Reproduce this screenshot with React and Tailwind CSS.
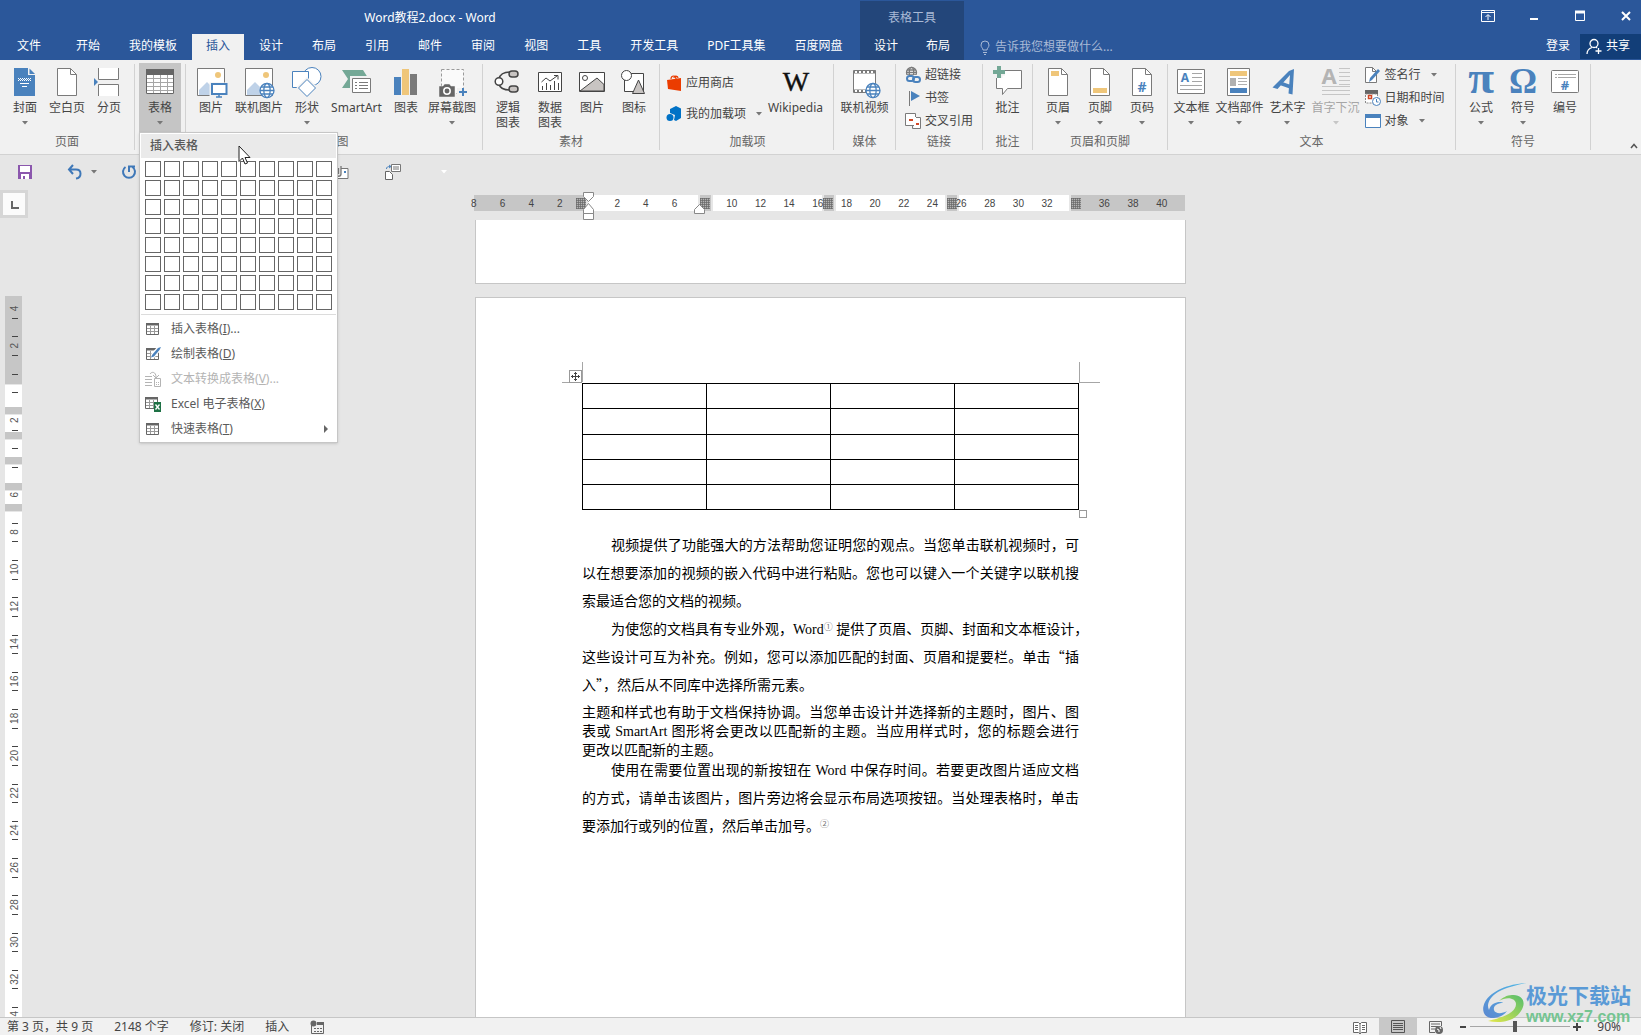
import { useState } from "react";
import clsx from "clsx";

const UI_FONT = "font-['Noto_Sans','Noto_Sans_CJK_SC',sans-serif]";
const DOC_FONT = "font-['Liberation_Serif','Noto_Sans_CJK_SC',serif]";

const TABS = [
  "开始", "我的模板", "插入", "设计", "布局", "引用", "邮件", "审阅",
  "视图", "工具", "开发工具", "PDF工具集", "百度网盘",
];

/* ---------- icons ---------- */

function Icon({ size = 32, className, children }) {
  return (
    <svg
      width={size}
      height={size}
      viewBox={`0 0 ${size} ${size}`}
      fill="none"
      className={clsx("shrink-0 overflow-visible", className)}
      aria-hidden="true"
    >
      {children}
    </svg>
  );
}

function Caret({ className }) {
  return (
    <svg width="6" height="4" viewBox="0 0 6 4" className={clsx("shrink-0", className)} aria-hidden="true">
      <path d="M0 0h6L3 3.5z" fill="currentColor" />
    </svg>
  );
}

const Globe = ({ x, y, r = 7, color = "#4a82bd" }) => (
  <g stroke={color} strokeWidth="1.3" fill="#fff">
    <circle cx={x} cy={y} r={r} />
    <ellipse cx={x} cy={y} rx={r * 0.45} ry={r} />
    <path d={`M${x - r} ${y}h${2 * r}M${x - r * 0.85} ${y - r * 0.5}h${r * 1.7}M${x - r * 0.85} ${y + r * 0.5}h${r * 1.7}`} />
  </g>
);

const CoverIcon = () => (
  <Icon>
    <path d="M5 2h14v7h7v21H5z" fill="#4a82bd" />
    <path d="M20.5 2.5V8H26z" fill="#4a82bd" />
    <path d="M9 12.5h13M9 14.5h13" stroke="#fff" strokeDasharray="1 1" />
    <path d="M10 13.5h12" stroke="#fff" strokeDasharray="1 1" />
    <path d="M11 17.5h9M13 20.5h5" stroke="#fff" />
  </Icon>
);

const PagePath = () => (
  <>
    <path d="M6.5 2.5h13l6 6v21h-19z" fill="#fff" stroke="#7a7a7a" />
    <path d="M19.5 2.5v6h6" stroke="#7a7a7a" />
  </>
);

const BlankIcon = () => (
  <Icon>
    <PagePath />
  </Icon>
);

const BreakIcon = () => (
  <Icon>
    <path d="M5.5 2v11.500h20V2M5.500 30V18.500h20V30" fill="#fff" stroke="#7a7a7a" />
    <path d="M1 12v8l4-4z" fill="#4a82bd" />
  </Icon>
);

const TableIcon = () => (
  <Icon>
    <path d="M2 3h28v25H2z" fill="#fff" />
    <path d="M2 3h28v6H2z" fill="#666" />
    <path d="M2 12.5h28M2 16.5h28M2 20.5h28M2 24.5h28M9.5 9v19M16.5 9v19M23.5 9v19" stroke="#a6a6a6" />
    <path d="M2.5 3.5h27v24h-27z" stroke="#666" />
  </Icon>
);

const Photo = () => (
  <>
    <path d="M2.5 2.5h27v27h-27z" fill="#fff" stroke="#7a7a7a" />
    <circle cx="23" cy="9" r="3" fill="#efc67a" />
    <path d="M4 29v-5l8-8 9 9v4z" fill="#bfd2e8" />
  </>
);

const PictureIcon = () => (
  <Icon>
    <Photo />
    <path d="M16.5 18.5h15v10h-15z" fill="#fff" stroke="#f1f1f1" strokeWidth="4" />
    <path d="M17 18h14.5v10H17z" fill="#fff" stroke="#4a82bd" strokeWidth="2" />
    <path d="M24 28v3M21 31h6" stroke="#4a82bd" strokeWidth="1.5" />
  </Icon>
);

const OnlinePictureIcon = () => (
  <Icon>
    <Photo />
    <Globe x={24} y={24.5} />
  </Icon>
);

const ShapesIcon = () => (
  <Icon>
    <circle cx="21" cy="10.5" r="9" fill="#fff" stroke="#4a82bd" />
    <path d="M1.5 5.5h16v16h-16z" fill="#fff" stroke="#4a82bd" />
    <path d="M16 11l10.5 10.5L16 32 5.5 21.5z" fill="#f1f1f1" />
    <path d="M16 13.5l8.5 8.5L16 30.5 7.5 22z" fill="#fff" stroke="#4a82bd" />
  </Icon>
);

const SmartArtIcon = () => (
  <Icon>
    <path d="M2 4h21l7 11-7 7H2l6-9z" fill="#74a896" />
    <path d="M10 10h23v19H10z" fill="#f1f1f1" />
    <path d="M12.5 12.5h18v14h-18z" fill="#fff" stroke="#7a7a7a" />
    <path d="M15 16.5h2M19 16.5h9M15 19.5h2M19 19.5h9M15 22.5h2M19 22.5h9" stroke="#7a7a7a" />
  </Icon>
);

const ChartIcon = () => (
  <Icon>
    <path d="M4 11h7v18H4z" fill="#4a82bd" />
    <path d="M12 3h7v26h-7z" fill="#efc67a" />
    <path d="M20 8h7v21h-7z" fill="#7a7a7a" />
  </Icon>
);

const ScreenshotIcon = () => (
  <Icon>
    <path d="M5.5 3.5h22v24h-22z" fill="#fafafa" stroke="#9a9a9a" strokeDasharray="3 2" />
    <path d="M3 20h4l1.5-2h5l1.5 2h4v11H3z" fill="#666" stroke="#f1f1f1" strokeWidth=".5" />
    <circle cx="11" cy="25" r="3.2" stroke="#fff" strokeWidth="1.5" />
    <path d="M21 22h10v8H21z" fill="#f1f1f1" />
    <path d="M27 22v8M23 26h8" stroke="#4a82bd" strokeWidth="2" />
  </Icon>
);

const LogicIcon = () => (
  <Icon>
    <path d="M7 13c1-5 5-7 11-7M7 18c1 5 5 6 11 6" stroke="#444" strokeWidth="1.5" />
    <circle cx="7" cy="15.5" r="3.8" fill="#fff" stroke="#444" strokeWidth="1.5" />
    <rect x="17" y="5" width="9" height="6" rx="3" fill="#c8c4c2" stroke="#444" strokeWidth="1.5" />
    <rect x="17" y="20" width="9" height="6" rx="3" fill="#c8c4c2" stroke="#444" strokeWidth="1.5" />
  </Icon>
);

const DataChartIcon = () => (
  <Icon>
    <path d="M4.5 6.5h23v19h-23z" fill="#fff" stroke="#444" />
    <path d="M8.5 20v4M12.5 17v7M16.5 19v5M20.5 15v9M24.5 17v7" stroke="#444" />
    <path d="M7.5 16l4.5-4 4 3 7-5M20 9.5h4v4" stroke="#444" />
  </Icon>
);

const MaterialPictureIcon = () => (
  <Icon>
    <path d="M3.5 6.5h25v19h-25z" fill="#fff" stroke="#444" />
    <path d="M4 25l17-13 7 6.500V25z" fill="#c8c4c2" stroke="#444" />
    <circle cx="9" cy="12" r="2.500" stroke="#444" />
  </Icon>
);

const MaterialShapeIcon = () => (
  <Icon>
    <path d="M6.5 7.500h19v18h-19z" fill="#fff" stroke="#444" />
    <circle cx="8.500" cy="9.500" r="5" fill="#fff" stroke="#444" />
    <path d="M20.500 14l6 13.500h-12z" fill="#c8c4c2" stroke="#444" />
  </Icon>
);

const WikipediaIcon = () => (
  <Icon>
    <text x="16" y="25" textAnchor="middle" fontSize="28" fill="#111" stroke="#111" strokeWidth=".4" className="font-['Liberation_Serif',serif]">
      W
    </text>
  </Icon>
);

const VideoIcon = () => (
  <Icon>
    <path d="M5.5 4.5h22v22h-22z" fill="#fff" stroke="#7a7a7a" />
    <path d="M6 6h22M6 25h22" stroke="#7a7a7a" strokeWidth="3" />
    <path d="M7 6h20M7 25h20" stroke="#fff" strokeWidth="2" strokeDasharray="2 2" />
    <Globe x={25} y={24.5} />
  </Icon>
);

const CommentIcon = () => (
  <Icon>
    <path d="M4.5 4.5h25v18h-14l-5 6v-6h-6z" fill="#fff" stroke="#7a7a7a" strokeLinejoin="round" />
    <path d="M7 0v12M1 6h12" stroke="#f1f1f1" strokeWidth="7" />
    <path d="M7 0v12M1 6h12" stroke="#74a896" strokeWidth="4" />
  </Icon>
);

const HeaderIcon = () => (
  <Icon>
    <PagePath />
    <path d="M9 5h8v5H9z" fill="#efc67a" />
  </Icon>
);

const FooterIcon = () => (
  <Icon>
    <PagePath />
    <path d="M9 22h14v5H9z" fill="#efc67a" />
  </Icon>
);

const PageNumberIcon = () => (
  <Icon>
    <PagePath />
    <text x="16" y="26" textAnchor="middle" fontSize="14" fontWeight="bold" fill="#4a82bd">
      #
    </text>
  </Icon>
);

const TextBoxIcon = () => (
  <Icon>
    <path d="M2.5 3.5h27v24h-27z" fill="#fff" stroke="#7a7a7a" />
    <text x="10" y="16" textAnchor="middle" fontSize="12" fontWeight="bold" fill="#4a82bd">
      A
    </text>
    <path d="M17 7.5h10M17 11.5h10M17 15.5h10M5 19.5h22M5 23.5h22" stroke="#a6a6a6" />
  </Icon>
);

const PartsIcon = () => (
  <Icon>
    <path d="M4.5 2.5h22v27h-22z" fill="#fff" stroke="#7a7a7a" />
    <path d="M7 5h17v5H7z" fill="#efc67a" />
    <path d="M7 12h6v8H7z" fill="#b0b0b0" />
    <path d="M15 12.5h9M15 15.5h9M15 18.5h9" stroke="#b0b0b0" />
    <path d="M7 22h17v5H7z" fill="#4a82bd" />
  </Icon>
);

const WordArtIcon = () => (
  <Icon>
    <path d="M1.500 21.500L18 5l5-2-1.500 25.500-4-1L19 9 6.500 23z" fill="#4a82bd" />
    <path d="M10 17.500l10 3.500" stroke="#4a82bd" strokeWidth="3.500" />
  </Icon>
);

const DropCapIcon = () => (
  <Icon>
    <text x="9" y="18" textAnchor="middle" fontSize="22" fontWeight="bold" fill="#b4b4b4">
      A
    </text>
    <path d="M19 2.5h11M19 6.5h11M19 10.5h11M19 14.5h11M19 18.5h11M2 20.500h28M2 24.500h28M2 28.500h28" stroke="#c6c6c6" />
  </Icon>
);

const SymbolText = ({ children, size }) => (
  <Icon>
    <text x="16" y="27" textAnchor="middle" fontSize={size} fontWeight="bold" fill="#4a82bd" className="font-['Liberation_Serif',serif]">
      {children}
    </text>
  </Icon>
);

const PiIcon = () => <SymbolText size={47}>π</SymbolText>;
const OmegaIcon = () => <SymbolText size={35}>Ω</SymbolText>;

const NumberIcon = () => (
  <Icon>
    <rect x="2.5" y="4.5" width="27" height="22" rx="1" fill="#fff" stroke="#7a7a7a" />
    <path d="M6 8.5h2M9 8.5h18M6 11.5h2M9 11.5h18" stroke="#a6a6a6" />
    <text x="16" y="24" textAnchor="middle" fontSize="13" fontWeight="bold" fill="#4a82bd">
      #
    </text>
  </Icon>
);

const StoreIcon = () => (
  <Icon size={16}>
    <path d="M1 5l14-2v13L2 14z" fill="#eb3c00" />
    <path d="M5 4c0-4 5-4 5 0M8 3c0-3 4-2 4 0" stroke="#eb3c00" strokeWidth="1.2" />
  </Icon>
);

const AddinIcon = () => (
  <Icon size={16}>
    <path d="M4 3l6-3 5 2.500V12l-5 3-2-1 1-5-5-2z" fill="#0072c6" />
    <circle cx="4" cy="11.500" r="3.500" fill="#0072c6" />
  </Icon>
);

const LinkIcon = () => (
  <Icon size={16}>
    <Globe x={6.5} y={5.5} r={5} color="#7a7a7a" />
    <path d="M0 8h16v8H0z" fill="#f1f1f1" />
    <rect x="2" y="9" width="7" height="5" rx="2.5" stroke="#4a82bd" strokeWidth="2" />
    <rect x="8" y="10" width="7" height="5" rx="2.5" stroke="#4a82bd" strokeWidth="2" />
  </Icon>
);

const BookmarkIcon = () => (
  <Icon size={16}>
    <path d="M4.5 1v15" stroke="#7a7a7a" />
    <path d="M6 1l9 5-9 5z" fill="#4a82bd" />
  </Icon>
);

const CrossRefIcon = () => (
  <Icon size={16}>
    <path d="M.5.5h10v12H.5z" fill="#fff" stroke="#7a7a7a" />
    <path d="M9 4h7v12H9z" fill="#fff" />
    <path d="M11 4.5h4.5v11h-8V13" stroke="#7a7a7a" />
    <path d="M4 6h4v2H4zM11 10h3v2h-3z" fill="#d24726" />
  </Icon>
);

const SignatureIcon = () => (
  <Icon size={16}>
    <path d="M.5.5h7l4 4v11H.5z" fill="#fff" stroke="#7a7a7a" />
    <path d="M7.5.5v4h4" stroke="#7a7a7a" />
    <path d="M15 4l-8 9-3 2 1-4 8-9z" fill="#4a82bd" />
  </Icon>
);

const DateIcon = () => (
  <Icon size={16}>
    <path d="M0 0h13v4H0z" fill="#666" />
    <path d="M.5 4h12v9H.5z" fill="#fff" stroke="#8a8a8a" strokeDasharray="2 1" />
    <path d="M3.5 5.5h3v3h-3z" stroke="#d24726" strokeWidth="1.5" />
    <circle cx="11.5" cy="11.5" r="4" fill="#fff" stroke="#4a82bd" />
    <path d="M11.5 9v3h2" stroke="#4a82bd" />
  </Icon>
);

const ObjectIcon = () => (
  <Icon size={16}>
    <path d="M.5 1.5h15v13H.5z" fill="#fff" stroke="#4a82bd" />
    <path d="M0 1h16v4H0z" fill="#4a82bd" />
  </Icon>
);

const MiniTable = ({ color = "#666" }) => (
  <>
    <path d="M1.5 2.5h12v11h-12z" fill="#fff" stroke={color} />
    <path d="M1 2h13v2.5H1z" fill={color} />
    <path d="M2 7.5h11M2 10.5h11M5.5 5v8M9.5 5v8" stroke="#9a9a9a" />
  </>
);

const InsertTableIcon = () => (
  <Icon size={16}>
    <MiniTable />
  </Icon>
);

const DrawTableIcon = () => (
  <Icon size={16}>
    <MiniTable />
    <path d="M13 0h3v4l-7 8H6V8z" fill="#fff" />
    <path d="M16 1l-1.500 3L9 10.500 6 11.500 7 9l6-7z" fill="#4a82bd" />
  </Icon>
);

const ConvertIcon = () => (
  <Icon size={16}>
    <path d="M0 5.5h7M0 8.5h7M0 11.5h7M0 14.5h7M5 3c2-3 6-2 6 3M8 4l3 3 3-3" stroke="#b4b4b4" />
    <path d="M9.5 7.5h6v8h-6z" fill="#fff" stroke="#b4b4b4" />
    <path d="M11 11.5h4M11 13.5h4" stroke="#b4b4b4" strokeDasharray="1 1" />
  </Icon>
);

const ExcelIcon = () => (
  <Icon size={16}>
    <g transform="translate(-1 -1)">
      <MiniTable />
    </g>
    <path d="M9 6h7v10H9z" fill="#1e7145" />
    <path d="M10.5 8.5l4 5M14.5 8.5l-4 5" stroke="#fff" strokeWidth="1.3" />
  </Icon>
);

/* ---------- title bar and tabs ---------- */

function WindowButton({ label, children }) {
  return (
    <button aria-label={label} className="flex h-8 w-[46px] items-center justify-center">
      <Icon size={14}>{children}</Icon>
    </button>
  );
}

function Header() {
  const [tab, setTab] = useState("插入");

  return (
    <header className="flex h-[60px] shrink-0 bg-[#2b579a] text-xs text-white">
      <div className="flex w-[860px] shrink-0 flex-col">
        <h1 className="flex h-[34px] items-center justify-center pt-0.5 font-normal">Word教程2.docx - Word</h1>
        <nav className="flex h-[26px] gap-px">
          <button className="mr-[3px] w-[58px] shrink-0 pb-0.5">文件</button>
          {TABS.map((t) => (
            <button
              key={t}
              onClick={() => setTab(t)}
              className={clsx("shrink-0 px-3.5 pb-0.5 whitespace-nowrap", tab === t && "bg-[#f1f1f1] text-[#2b579a]")}
            >
              {t}
            </button>
          ))}
        </nav>
      </div>
      <div className="mt-px flex w-[104px] shrink-0 flex-col bg-[#23467a]">
        <p className="flex h-[33px] items-center justify-center text-[#a9bad6]">表格工具</p>
        <div className="flex h-[26px] justify-center">
          <button className="w-[52px] pb-0.5">设计</button>
          <button className="w-[52px] pb-0.5">布局</button>
        </div>
      </div>
      <div className="flex min-w-0 flex-1 flex-col">
        <div className="flex h-[34px] justify-end">
          <WindowButton label="功能区显示选项">
            <path d="M.5 1.5h13v11H.5zM.5 3.5h13M7 11V6M4.500 8L7 5.500 9.500 8" stroke="#fff" />
          </WindowButton>
          <WindowButton label="最小化">
            <path d="M3 10h8" stroke="#fff" strokeWidth="2" />
          </WindowButton>
          <WindowButton label="最大化">
            <path d="M2.5 2.500h9v9h-9z" stroke="#fff" />
            <path d="M2 3h10" stroke="#fff" strokeWidth="3" />
          </WindowButton>
          <button aria-label="关闭" className="flex h-8 w-[38px] items-center justify-center pl-2">
            <Icon size={14}>
              <path d="M3 3l8 8M11 3l-8 8" stroke="#fff" strokeWidth="2" />
            </Icon>
          </button>
        </div>
        <div className="flex h-[26px] items-center">
          <label className="flex flex-1 items-center gap-1 pl-[15px] text-[#a9bad6]">
            <Icon size={12}>
              <path d="M4 9C4 7 2 6.500 2 4a4 4 0 018 0c0 2.500-2 3-2 5zM4 11.500h4M5 13.500h2" stroke="#a9bad6" />
            </Icon>
            <input
              aria-label="告诉我您想要做什么"
              placeholder="告诉我您想要做什么..."
              className="w-40 bg-transparent outline-none placeholder:text-[#a9bad6]"
            />
          </label>
          <button className="px-2.5 pb-0.5">登录</button>
          <button className="flex h-[25px] w-[61px] items-center gap-1 self-start bg-[#123e78] pb-0.5 pl-1.5">
            <Icon size={16}>
              <circle cx="8" cy="5.500" r="4" stroke="#fff" strokeWidth="1.300" />
              <path d="M1 16c0-4 2-5.500 5-6.500M10 9l1 1M12.500 10v6M9.500 13h6" stroke="#fff" strokeWidth="1.300" />
            </Icon>
            共享
          </button>
        </div>
      </div>
    </header>
  );
}

/* ---------- ribbon ---------- */

function Group({ label, className, children }) {
  return (
    <section className={clsx("flex shrink-0 py-1", className)}>
      <div className="-mt-px flex min-w-0 flex-1 flex-col">
        <div className="flex h-[74px] justify-center">{children}</div>
        {label && <h2 className="text-center leading-4 text-[#666]">{label}</h2>}
      </div>
      <div className="w-px bg-[#d2d2d2]" />
    </section>
  );
}

function BigButton({ icon: Ico, label, label2, caret, pad = "px-1.5", disabled }) {
  return (
    <button
      disabled={disabled}
      className={clsx("flex shrink-0 flex-col items-center pt-[3px] leading-[15px] whitespace-nowrap", pad, disabled ? "text-[#a6a6a6]" : "text-[#444]")}
    >
      <Ico />
      <span className="mt-0.5">{label}</span>
      {label2 && <span>{label2}</span>}
      {caret && <Caret className={clsx("mt-1.5", disabled ? "text-[#c6c6c6]" : "text-[#777]")} />}
    </button>
  );
}

function SmallButton({ icon: Ico, label, caret, height = "h-[23px]" }) {
  return (
    <button className={clsx("flex items-center gap-1 whitespace-nowrap text-[#444]", height)}>
      <Ico />
      {label}
      {caret && <Caret className="ml-1.5 text-[#777]" />}
    </button>
  );
}

const MENU_ITEMS = [
  { icon: InsertTableIcon, text: "插入表格", hotkey: "I", dots: true },
  { icon: DrawTableIcon, text: "绘制表格", hotkey: "D" },
  { icon: ConvertIcon, text: "文本转换成表格", hotkey: "V", dots: true, disabled: true },
  { icon: ExcelIcon, text: "Excel 电子表格", hotkey: "X" },
  { icon: InsertTableIcon, text: "快速表格", hotkey: "T", submenu: true },
];

function TableMenu() {
  return (
    <div className="absolute top-[69px] left-0 z-10 w-[199px] border border-[#c6c6c6] bg-white pb-px text-[#5a5a5a] shadow-sm">
      <h3 className="m-px h-6 bg-[#eaeaea] pl-[9px] leading-6 font-medium">插入表格</h3>
      <div className="mt-[3px] grid w-fit grid-cols-10 gap-[3px] px-[5px]">
        {Array.from({ length: 80 }, (_, i) => (
          <button
            key={i}
            aria-label={`${(i % 10) + 1} × ${Math.floor(i / 10) + 1}`}
            className="size-4 border border-[#666] bg-white"
          />
        ))}
      </div>
      <div className="mx-px mt-1 border-t border-[#dcdcdc] pt-px">
        {MENU_ITEMS.map((item) => (
          <button
            key={item.text}
            disabled={item.disabled}
            className={clsx("flex h-[25px] w-full items-center gap-2.5 pr-2 pl-1", item.disabled && "text-[#b4b4b4]")}
          >
            <item.icon />
            <span>
              {item.text}(<u>{item.hotkey}</u>){item.dots && "..."}
            </span>
            {item.submenu && (
              <svg width="4" height="8" viewBox="0 0 4 8" className="ml-auto" aria-hidden="true">
                <path d="M0 0v8l4-4z" fill="#666" />
              </svg>
            )}
          </button>
        ))}
      </div>
      <svg width="13" height="21" viewBox="0 0 13 21" className="absolute top-3 left-[98px]" aria-hidden="true">
        <path d="M1 1v15.500l3.500-3.500 2.500 6 2.500-1-2.500-5.500H12z" fill="#fff" stroke="#222" />
      </svg>
    </div>
  );
}

function Ribbon() {
  return (
    <div className="flex h-[95px] shrink-0 border-b border-[#d2d2d2] bg-[#f1f1f1] text-xs">
      <Group label="页面" className="w-[135px]">
        <BigButton icon={CoverIcon} label="封面" caret pad="px-0.5" />
        <BigButton icon={BlankIcon} label="空白页" />
        <BigButton icon={BreakIcon} label="分页" pad="px-0.5" />
      </Group>
      <Group className="w-[51px]">
        <div className="relative flex">
          <div className="flex h-[69px] bg-[#c5c5c5]">
            <BigButton icon={TableIcon} label="表格" caret pad="px-[5px]" />
          </div>
          <TableMenu />
        </div>
      </Group>
      <Group label="插图" className="w-[297px] pl-[5px]">
        <BigButton icon={PictureIcon} label="图片" pad="px-0.5" />
        <BigButton icon={OnlinePictureIcon} label="联机图片" />
        <BigButton icon={ShapesIcon} label="形状" caret pad="px-0.5" />
        <BigButton icon={SmartArtIcon} label="SmartArt" />
        <BigButton icon={ChartIcon} label="图表" pad="px-0.5" />
        <BigButton icon={ScreenshotIcon} label="屏幕截图" caret pad="px-1" />
      </Group>
      <Group label="素材" className="w-[177px]">
        <BigButton icon={LogicIcon} label="逻辑" label2="图表" pad="px-[5px]" />
        <BigButton icon={DataChartIcon} label="数据" label2="图表" pad="px-[5px]" />
        <BigButton icon={MaterialPictureIcon} label="图片" pad="px-[5px]" />
        <BigButton icon={MaterialShapeIcon} label="图标" pad="px-[5px]" />
      </Group>
      <Group label="加载项" className="w-[174px] pl-0.5">
        <div className="flex flex-col pt-1">
          <SmallButton icon={StoreIcon} label="应用商店" height="h-[31px]" />
          <SmallButton icon={AddinIcon} label="我的加载项" caret height="h-[31px]" />
        </div>
        <BigButton icon={WikipediaIcon} label="Wikipedia" />
      </Group>
      <Group label="媒体" className="w-[62px]">
        <BigButton icon={VideoIcon} label="联机视频" />
      </Group>
      <Group label="链接" className="w-[87px]">
        <div className="flex flex-col">
          <SmallButton icon={LinkIcon} label="超链接" />
          <SmallButton icon={BookmarkIcon} label="书签" />
          <SmallButton icon={CrossRefIcon} label="交叉引用" />
        </div>
      </Group>
      <Group label="批注" className="w-[50px]">
        <BigButton icon={CommentIcon} label="批注" />
      </Group>
      <Group label="页眉和页脚" className="w-[135px]">
        <BigButton icon={HeaderIcon} label="页眉" caret pad="px-[5px]" />
        <BigButton icon={FooterIcon} label="页脚" caret pad="px-[5px]" />
        <BigButton icon={PageNumberIcon} label="页码" caret pad="px-[5px]" />
      </Group>
      <Group label="文本" className="w-[288px]">
        <BigButton icon={TextBoxIcon} label="文本框" caret pad="px-[3px]" />
        <BigButton icon={PartsIcon} label="文档部件" caret pad="px-[3px]" />
        <BigButton icon={WordArtIcon} label="艺术字" caret pad="px-[3px]" />
        <BigButton icon={DropCapIcon} label="首字下沉" caret pad="px-[3px]" disabled />
        <div className="flex flex-col pr-2 pl-0.5">
          <SmallButton icon={SignatureIcon} label="签名行" caret />
          <SmallButton icon={DateIcon} label="日期和时间" />
          <SmallButton icon={ObjectIcon} label="对象" caret />
        </div>
      </Group>
      <Group label="符号" className="w-[135px]">
        <BigButton icon={PiIcon} label="公式" caret pad="px-[5px]" />
        <BigButton icon={OmegaIcon} label="符号" caret pad="px-[5px]" />
        <BigButton icon={NumberIcon} label="编号" pad="px-[5px]" />
      </Group>
      <button aria-label="折叠功能区" className="mt-auto ml-auto p-[3px] pb-1">
        <Icon size={8}>
          <path d="M1 6l3-3.5L7 6" stroke="#555" strokeWidth="1.5" />
        </Icon>
      </button>
    </div>
  );
}

function QuickAccess() {
  return (
    <div className="flex h-[35px] shrink-0 items-center pb-0.5 pl-[17px] text-[#777]">
      <button aria-label="保存">
        <Icon size={16}>
          <path d="M1 1h14v14H1z" fill="#8b57ad" />
          <path d="M3 2h10v6H3zM4 10h8v5H4z" fill="#fff" />
          <path d="M6 12h2v3H6z" fill="#8b57ad" />
        </Icon>
      </button>
      <button aria-label="撤消" className="ml-[34px] flex items-center gap-2">
        <Icon size={16}>
          <path d="M6 1L2 5.5 6 10M2.5 5.5H9c6 0 6 8 0 9" stroke="#3f78b8" strokeWidth="2" />
        </Icon>
        <Caret />
      </button>
      <button aria-label="恢复" className="ml-6">
        <Icon size={16}>
          <path d="M4.500 3a6 6 0 107 0M8 8V2.500h6" stroke="#3f78b8" strokeWidth="2" />
        </Icon>
      </button>
      <button aria-label="附件" className="ml-[196px]">
        <Icon size={16}>
          <path d="M4 4.5h11v10H4z" fill="#fff" stroke="#777" />
          <path d="M1 2h7v10H1z" fill="#e6e6e6" />
          <path d="M3 3v7c0 3 5 3 5 0V2M5.500 4v6" stroke="#777" strokeWidth="1.3" />
          <path d="M11 7h2v2h-2z" fill="#4a82bd" />
        </Icon>
      </button>
      <button aria-label="更新目录" className="ml-9">
        <Icon size={16}>
          <path d="M6.5.5h9v7h-9zM8 3h6M8 5h6" fill="#fff" stroke="#777" />
          <path d="M.5 7.5h4l3 3v5h-7z" fill="#fff" stroke="#666" />
          <path d="M1.5 5c0-2 1-2.5 4-2.5M4 1l2 1.5L4 4" stroke="#4a82bd" />
        </Icon>
      </button>
      <button aria-label="自定义快速访问工具栏" className="ml-10 text-white">
        <Caret />
      </button>
    </div>
  );
}

/* ---------- rulers ---------- */

const H_WHITE = [[113, 110], [238, 109], [361, 109], [484, 110]];
const H_MARKS = [101, 225, 348, 472, 596];
const V_WHITE = [[89, 22], [119, 17], [144, 17], [169, 18], [195, 13], [216, 600]];
const V_GREY = [[0, 88], [111, 7], [136, 7], [161, 7], [187, 7], [208, 7]];

function HorizontalRuler() {
  const steps = Array.from({ length: 25 }, (_, i) => i * 2 - 8);
  return (
    <svg width="711" height="30" viewBox="0 0 711 30" className="overflow-visible" aria-hidden="true">
      <path d="M-1 5h711v16H-1z" fill="#c6c6c6" />
      {H_WHITE.map(([x, w]) => (
        <path key={x} d={`M${x - 2} 5h${w + 4}v16h${-w - 4}z`} fill="#e6e6e6" />
      ))}
      {H_WHITE.map(([x, w]) => (
        <path key={x} d={`M${x} 5h${w}v16h${-w}z`} fill="#fff" />
      ))}
      {steps.map((n) => (
        <text
          key={n}
          x={113.5 + n * 14.33}
          y="17"
          textAnchor="middle"
          fontSize="10"
          fill="#444"
          className="font-['Liberation_Sans',sans-serif]"
        >
          {n === 0 || n === 8 || n === 34 ? "" : Math.abs(n)}
        </text>
      ))}
      {H_MARKS.map((x) => (
        <g key={x}>
          <path d={`M${x} 8h10v11h-10z`} fill="#b4b4b4" />
          <path
            d={`M${x} 8.5h10M${x} 10.5h10M${x} 12.5h10M${x} 14.5h10M${x} 16.5h10M${x} 18.5h10M${x + 0.5} 8v11M${x + 2.5} 8v11M${x + 4.5} 8v11M${x + 6.5} 8v11M${x + 8.5} 8v11`}
            stroke="#666"
            strokeOpacity=".7"
          />
        </g>
      ))}
      <path d="M108.5 2.5h10v4l-5 5-5-5zM108.5 23.5v-4l5-6 5 6v4zM108.5 23.5h10v6h-10z" fill="#fff" stroke="#888" />
      <path d="M219.5 23.5v-4l5-5 5 5v4z" fill="#fff" stroke="#888" />
    </svg>
  );
}

function VerticalRuler() {
  const numbers = Array.from({ length: 20 }, (_, i) => i * 2 - 4).filter((n) => n !== 0 && n !== 4);
  const ticks = Array.from({ length: 40 }, (_, i) => i - 3.5).filter((n) => ![1.5, 5.5, 6.5].includes(n));
  return (
    <svg width="22" height="721" viewBox="0 0 22 721" className="mt-[76px] block max-w-none" aria-hidden="true">
      {V_GREY.map(([y, h]) => (
        <path key={y} d={`M5 ${y}h17v${h}H5z`} fill="#c6c6c6" />
      ))}
      {V_WHITE.map(([y, h]) => (
        <path key={y} d={`M5 ${y}h17v${h}H5z`} fill="#fff" />
      ))}
      {ticks.map((n) => (
        <path key={n} d={`M12 ${Math.round(87 + n * 18.63) + 0.5}h6`} stroke="#444" />
      ))}
      {numbers.map((n) => (
        <text
          key={n}
          transform={`translate(18 ${87 + n * 18.63}) rotate(-90)`}
          textAnchor="middle"
          fontSize="10"
          fill="#555"
          className="font-['Liberation_Sans',sans-serif]"
        >
          {Math.abs(n)}
        </text>
      ))}
    </svg>
  );
}

/* ---------- document ---------- */

function Line({ children, indent, last, tight }) {
  return (
    <span
      className={clsx(
        "block whitespace-nowrap",
        tight ? "leading-[19px]" : "h-7 leading-7",
        indent && "pl-[29px]",
        !last && "text-justify [text-align-last:justify]"
      )}
    >
      {children}
    </span>
  );
}

const Quote = ({ children }) => <span className="font-['Noto_Sans_CJK_SC',sans-serif] leading-none">{children}</span>;

const NoteRef = ({ children }) => <sup className="text-[9px] leading-none text-[#777]">{children}</sup>;

function DocumentTable() {
  return (
    <div className="relative">
      <table className="w-full table-fixed border-collapse">
        <tbody>
          {[0, 1, 2, 3, 4].map((r) => (
            <tr key={r} className={r === 1 ? "h-[26px]" : "h-[25px]"}>
              {[0, 1, 2, 3].map((c) => (
                <td key={c} className="border border-black" />
              ))}
            </tr>
          ))}
        </tbody>
      </table>
      <span className="absolute -top-[21px] left-0 h-5 border-l border-[#a6a6a6]" />
      <span className="absolute -top-px right-full w-5 border-t border-[#a6a6a6]" />
      <span className="absolute -top-[21px] left-full h-[21px] w-[21px] border-b border-l border-[#a6a6a6]" />
      <button aria-label="移动表格" className="absolute -top-[13px] right-full size-[13px] border border-[#999] bg-white">
        <Icon size={11}>
          <path d="M5.5 1v9M1 5.5h9M4 2.5h3M4 8.5h3M2.5 4v3M8.5 4v3" stroke="#444" />
        </Icon>
      </button>
      <span className="absolute top-full left-full size-2 border border-[#999] bg-white" />
    </div>
  );
}

function Page() {
  return (
    <article
      className={clsx(
        "w-[711px] flex-1 border border-b-0 border-[#c6c6c6] bg-white px-[106px] pt-[85px] text-sm text-black",
        DOC_FONT
      )}
    >
      <DocumentTable />
      <p className="mt-[22px]">
        <Line indent>视频提供了功能强大的方法帮助您证明您的观点。当您单击联机视频时，可</Line>
        <Line>以在想要添加的视频的嵌入代码中进行粘贴。您也可以键入一个关键字以联机搜</Line>
        <Line last>索最适合您的文档的视频。</Line>
      </p>
      <p>
        <Line indent>
          为使您的文档具有专业外观，Word<NoteRef>①</NoteRef> 提供了页眉、页脚、封面和文本框设计，
        </Line>
        <Line>
          这些设计可互为补充。例如，您可以添加匹配的封面、页眉和提要栏。单击<Quote>“</Quote>插
        </Line>
        <Line last>
          入<Quote>”</Quote>，然后从不同库中选择所需元素。
        </Line>
      </p>
      <p className="mt-[3px] -mb-[3px]">
        <Line tight>主题和样式也有助于文档保持协调。当您单击设计并选择新的主题时，图片、图</Line>
        <Line tight>表或 SmartArt 图形将会更改以匹配新的主题。当应用样式时，您的标题会进行</Line>
        <Line tight last>更改以匹配新的主题。</Line>
      </p>
      <p>
        <Line indent>使用在需要位置出现的新按钮在 Word 中保存时间。若要更改图片适应文档</Line>
        <Line>的方式，请单击该图片，图片旁边将会显示布局选项按钮。当处理表格时，单击</Line>
        <Line last>
          要添加行或列的位置，然后单击加号。<NoteRef>②</NoteRef>
        </Line>
      </p>
    </article>
  );
}

function Workspace() {
  return (
    <main className="flex min-h-0 flex-1 flex-col overflow-hidden">
      <div className="flex h-[30px] shrink-0">
        <div className="w-5 shrink-0">
          <button aria-label="制表符" className="block size-7 border-[3px] border-[#d6d6d6] bg-[#fbfbfb]">
            <Icon size={22}>
              <path d="M9 8v7h7" stroke="#666" strokeWidth="2" />
            </Icon>
          </button>
        </div>
        <div className="flex flex-1 justify-center">
          <HorizontalRuler />
        </div>
      </div>
      <div className="flex min-h-0 flex-1">
        <div className="w-5 shrink-0">
          <VerticalRuler />
        </div>
        <div className="flex flex-1 flex-col items-center">
          <div className="mb-[13px] h-16 w-[711px] shrink-0 border border-t-0 border-[#c6c6c6] bg-white" />
          <Page />
        </div>
      </div>
    </main>
  );
}

/* ---------- status bar ---------- */

function StatusBar() {
  return (
    <footer className="flex h-[18px] shrink-0 items-center border-t border-[#c6c6c6] bg-[#f1f1f1] pl-[7px] text-xs leading-4 text-[#444]">
      <div className="flex items-center gap-[21px] whitespace-nowrap">
        <span>第 3 页，共 9 页</span>
        <span>2148 个字</span>
        <span>修订: 关闭</span>
        <span>插入</span>
        <Icon size={14}>
          <path d="M1.5 5v8.5h12v-11H7" stroke="#666" />
          <path d="M7 2h7v3H7z" fill="#666" />
          <circle cx="3.5" cy="3.5" r="3" fill="#666" />
          <path d="M4 8.5h8M4 11.5h8" stroke="#666" strokeDasharray="2 1" />
        </Icon>
      </div>
      <div className="ml-auto flex h-full items-center pr-5">
        <button aria-label="阅读视图" className="mr-3">
          <Icon size={14}>
            <path d="M7 3v11M.5 2.5h5L7 4l1.5-1.5h5v10h-5L7 14l-1.5-1.5h-5z" fill="#fff" stroke="#666" />
            <path d="M2 5.5h3M2 7.5h3M2 9.5h3M9 5.5h3M9 7.5h3M9 9.5h3" stroke="#666" />
          </Icon>
        </button>
        <button aria-label="页面视图" className="flex h-full w-[38px] items-center justify-center bg-[#c8c8c8]">
          <Icon size={14}>
            <path d="M.5.5h13v12H.5z" stroke="#555" />
            <path d="M2 3.500h10M2 5.500h10M2 7.500h10M2 9.500h10" stroke="#555" />
          </Icon>
        </button>
        <button aria-label="Web 版式视图" className="ml-3">
          <Icon size={14}>
            <path d="M12.5 6V1.5H.5v11H6M2 4h9M2 6.5h7M2 9h4" stroke="#666" />
            <circle cx="10" cy="10" r="4" fill="#666" />
            <path d="M8 9l2 1v2M11 7l1 2" stroke="#fff" />
          </Icon>
        </button>
        <button aria-label="缩小" className="ml-4">
          <Icon size={8}>
            <path d="M1 4h6" stroke="#444" strokeWidth="2" />
          </Icon>
        </button>
        <input
          type="range"
          aria-label="缩放"
          min="0"
          max="100"
          defaultValue="45"
          className="mx-[3px] h-px w-[100px] appearance-none bg-[#a6a6a6] [&::-webkit-slider-thumb]:h-[11px] [&::-webkit-slider-thumb]:w-1 [&::-webkit-slider-thumb]:appearance-none [&::-webkit-slider-thumb]:bg-[#555]"
        />
        <button aria-label="放大">
          <Icon size={8}>
            <path d="M0 4h8M4 0v8" stroke="#444" strokeWidth="2" />
          </Icon>
        </button>
        <span className="ml-4">90%</span>
      </div>
    </footer>
  );
}

function Watermark() {
  return (
    <div className="pointer-events-none absolute right-2.5 bottom-2 flex items-start">
      <svg width="43" height="42" viewBox="0 0 43 42" aria-hidden="true">
        <defs>
          <linearGradient id="swirlBlue" x1="0" y1="1" x2="1" y2="0">
            <stop offset="0" stopColor="#5b87d0" />
            <stop offset="1" stopColor="#4fb8e6" />
          </linearGradient>
          <linearGradient id="swirlGreen" x1="0" y1="1" x2="1" y2="0">
            <stop offset="0" stopColor="#e6e84a" />
            <stop offset="1" stopColor="#53bd6e" />
          </linearGradient>
        </defs>
        <path
          d="M43 0C25 1 8 8 2 19c-5 10 1 17 9 16 6-1 10-3 13-7-5 3-12 3-13-1-1-4 3-7 9-7-2-2-12-1-14 7-3-6 1-13 9-18C24 4 34 2 43 0z"
          fill="url(#swirlBlue)"
        />
        <path
          d="M16 18c8-5 17-3 17 3 0 8-11 13-28 17 13 3 27 0 33-10 6-9 1-17-9-16-5 0-10 3-13 6z"
          fill="url(#swirlGreen)"
        />
      </svg>
      <div className="leading-6">
        <p className="text-[21px] font-bold text-[#5a9ad6]">极光下载站</p>
        <p className="font-['Liberation_Sans',sans-serif] text-base leading-5 font-bold text-[#74c491]">www.xz7.com</p>
      </div>
    </div>
  );
}

export default function App() {
  return (
    <div className={clsx("relative flex h-screen flex-col overflow-hidden bg-[#e6e6e6]", UI_FONT)}>
      <Header />
      <Ribbon />
      <QuickAccess />
      <Workspace />
      <StatusBar />
      <Watermark />
    </div>
  );
}
